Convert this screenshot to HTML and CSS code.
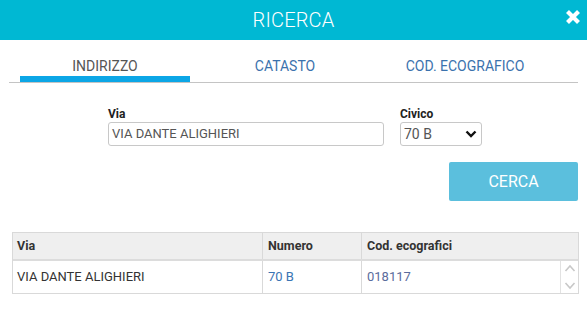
FILE: index.html
```html
<!DOCTYPE html>
<html lang="it">
<head>
  <meta charset="UTF-8" />
  <meta name="viewport" content="width=device-width, initial-scale=1.0" />
  <title>Ricerca</title>
  <link rel="stylesheet" href="styles.css">
</head>
<body>
  <header class="topbar">
    <span class="title">RICERCA</span>
    <span class="close">
      <svg width="16" height="16" viewBox="0 0 16 16"><path d="M2.5 2.5 L13.5 13.5 M13.5 2.5 L2.5 13.5" stroke="#fff" stroke-width="4.2" stroke-linecap="butt"/></svg>
    </span>
  </header>

  <nav class="tabs">
    <a class="tab active">INDIRIZZO</a>
    <a class="tab">CATASTO</a>
    <a class="tab">COD. ECOGRAFICO</a>
  </nav>

  <form class="search">
    <div class="field via">
      <label>Via</label>
      <div class="input">VIA DANTE ALIGHIERI</div>
    </div>
    <div class="field civico">
      <label>Civico</label>
      <div class="input select">
        <span>70 B</span>
        <svg width="12" height="8" viewBox="0 0 12 8"><path d="M1.5 1.5 L6 6 L10.5 1.5" fill="none" stroke="#111" stroke-width="2.4"/></svg>
      </div>
    </div>
  </form>

  <div class="actions">
    <button class="btn">CERCA</button>
  </div>

  <div class="results">
    <div class="row head">
      <div class="cell">Via</div>
      <div class="cell">Numero</div>
      <div class="cell">Cod. ecografici</div>
    </div>
    <div class="row body">
      <div class="cell">VIA DANTE ALIGHIERI</div>
      <div class="cell link">70 B</div>
      <div class="cell link code">018117</div>
      <div class="scroll">
        <svg width="12" height="30" viewBox="0 0 12 30"><path d="M1.5 9 L6 4 L10.5 9 M1.5 21 L6 26 L10.5 21" fill="none" stroke="#c8c8c8" stroke-width="1.6"/></svg>
      </div>
    </div>
  </div>
</body>
</html>
```

FILE: styles.css
```css
body {
  margin: 0;
  font-family: Roboto, "Liberation Sans", sans-serif;
  background: #fff;
  color: #333;
}
.topbar {
  height: 40px;
  background-color: #00b8d3;
  display: flex;
  align-items: center;
  justify-content: center;
  position: relative;
}
.title {
  color: #fff;
  font-size: 20px;
  font-weight: 300;
  letter-spacing: 0.2px;
}
.close {
  position: absolute;
  right: 6px;
  top: 9px;
  display: flex;
}
.tabs {
  display: flex;
  margin: 0 9px;
  padding: 18px 0 0 6px;
  border-bottom: 1px solid #c4c4c4;
}
.tab {
  width: 170px;
  margin: 0 5px;
  text-align: center;
  font-size: 14px;
  line-height: 16px;
  color: #3b72ad;
  padding-bottom: 2px;
  border-bottom: 6px solid transparent;
}
.tab.active {
  color: #555;
  border-bottom-color: #0ca6e6;
}
.search {
  display: flex;
  gap: 16px;
  padding-left: 108px;
  margin-top: 24px;
}
.field label {
  display: block;
  font-size: 12px;
  font-weight: bold;
  line-height: 14px;
  margin-bottom: 1px;
  color: #222;
}
.input {
  box-sizing: border-box;
  height: 24px;
  border: 1px solid #c8c8c8;
  border-radius: 3px;
  padding: 0 6px 0 3px;
  font-size: 13px;
  line-height: 22px;
  color: #555;
}
.via .input {
  width: 276px;
}
.civico .input {
  width: 82px;
}
.select {
  display: flex;
  align-items: center;
  justify-content: space-between;
  font-size: 14px;
  padding-right: 4px;
}
.actions {
  display: flex;
  justify-content: flex-end;
  margin: 16px 9px 0 0;
}
.btn {
  width: 129px;
  height: 39px;
  border: none;
  border-radius: 2px;
  background-color: #5bbfdd;
  color: #fff;
  font-family: Roboto, "Liberation Sans", sans-serif;
  font-size: 16px;
}
.results {
  margin: 31px 8px 0 12px;
  border: 1px solid #d9d9d9;
}
.row {
  display: grid;
  grid-template-columns: 249px 99px 1fr;
}
.head {
  background: #efefef;
  height: 26px;
  border-bottom: 2px solid #dcdcdc;
}
.head .cell {
  font-size: 12.5px;
  font-weight: bold;
  line-height: 26px;
  color: #333;
}
.body {
  grid-template-columns: 249px 99px 1fr 18px;
  height: 32px;
}
.cell {
  padding-left: 5px;
  border-left: 1px solid #d9d9d9;
  font-size: 13px;
  line-height: 32px;
  color: #333;
}
.cell:first-child {
  padding-left: 4px;
  border-left: none;
}
.link {
  color: #3a74b4;
}
.code {
  color: #5a6c9c;
}
.scroll {
  border-left: 1px solid #e2e2e2;
  display: flex;
  align-items: center;
  justify-content: center;
}
```
